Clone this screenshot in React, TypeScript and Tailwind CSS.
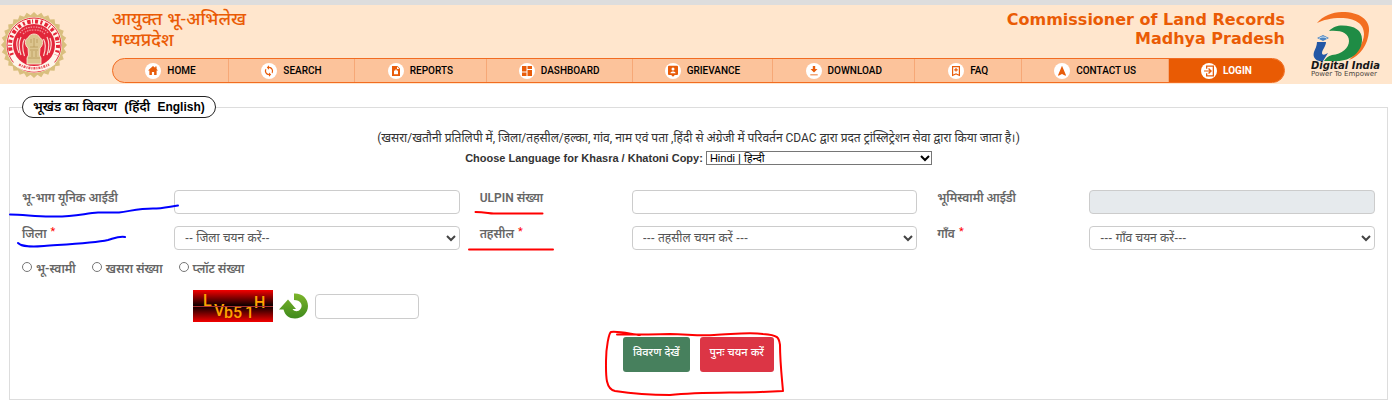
import type { ReactNode } from 'react'

type NavItem = { label: string; width: string; icon: ReactNode }

const navItems: NavItem[] = [
  {
    label: 'HOME',
    width: 'grow-[116]',
    icon: <path d="M8 3 3 7.4h1.4V12h2.5V9h2.2v3h2.5V7.4H13L11.6 6V3.6h-1.4v1.2z" />,
  },
  {
    label: 'SEARCH',
    width: 'grow-[126]',
    icon: (
      <path d="M8 3.8V2.3L5.8 4.5 8 6.7V5.1a3 3 0 0 1 2.6 4.4l.9.9A4.3 4.3 0 0 0 8 3.8zM8 11a3 3 0 0 1-2.6-4.4l-.9-.9A4.3 4.3 0 0 0 8 12.3v1.5l2.2-2.2L8 9.4z" />
    ),
  },
  {
    label: 'REPORTS',
    width: 'grow-[132]',
    icon: (
      <path fillRule="evenodd" d="M4 3h5.5L12 5.5V13H4zM6 7.8v3.4h4V7.8h-.7a1.3 1.3 0 0 0-2.6 0zm1.4 0a.6.6 0 0 1 1.2 0zM9 3.6V6h2.4z" />
    ),
  },
  {
    label: 'DASHBOARD',
    width: 'grow-[146]',
    icon: <path d="M3 3h4.5v5.5H3zM8.5 3H13v3H8.5zM3 9.5h4.5V13H3zM8.5 7H13v6H8.5z" />,
  },
  {
    label: 'GRIEVANCE',
    width: 'grow-[141]',
    icon: (
      <path fillRule="evenodd" d="M4 2.8h8a1 1 0 0 1 1 1V11a1 1 0 0 1-1 1H9.8L8 13.8 6.2 12H4a1 1 0 0 1-1-1V3.800a1 1 0 0 1 1-1zM8 4.600a1.500 1.500 0 1 0 0 3 1.500 1.500 0 0 0 0-3zM5.400 10.200h5.200c0-2.400-5.200-2.400-5.200 0z" />
    ),
  },
  {
    label: 'DOWNLOAD',
    width: 'grow-[142]',
    icon: (
      <>
        <path d="M6.800 3h2.400v3h2.300L8 9.600 4.500 6h2.300z" />
        <path d="M4.300 11h7.400v1.400H4.300z" opacity=".55" />
      </>
    ),
  },
  {
    label: 'FAQ',
    width: 'grow-[107]',
    icon: (
      <path fillRule="evenodd" d="M4 3h8v10.300L8 11.600l-4 1.700zM5.200 4.200v7.200L8 10.200l2.800 1.200V4.200zM7.400 5h1.200v1.200h1.200v1.200H8.600v1.200H7.400V7.400H6.200V6.200h1.200z" />
    ),
  },
  {
    label: 'CONTACT US',
    width: 'grow-[147]',
    icon: <path d="M8 2.800 12 12.300l-.5.500L8 11l-3.500 1.800-.5-.5z" />,
  },
  {
    label: 'LOGIN',
    width: 'grow-[116]',
    icon: (
      <path fillRule="evenodd" d="M5 2.500h8v11H5V10.300h1.300v1.900h5.400V3.800H6.300v1.900H5zM8 5l3 3-3 3-.9-.9 1.400-1.500H3V7.400h5.500L7.100 5.900z" />
    ),
  },
]

function Seal() {
  const points: string[] = []
  for (let i = 0; i < 56; i++) {
    const angle = (i * Math.PI) / 28
    const radius = i % 2 ? 30 : 33
    points.push(`${(34 + radius * Math.cos(angle)).toFixed(1)},${(34 + radius * Math.sin(angle)).toFixed(1)}`)
  }
  return (
    <svg viewBox="0 0 68 68" className="h-[68px] w-[68px] shrink-0" aria-label="Seal of Madhya Pradesh" role="img">
      <polygon points={points.join(' ')} fill="#d9bf7e" />
      <circle cx="34" cy="34" r="28" fill="#fff6ec" />
      <circle cx="34" cy="34" r="27" fill="none" stroke="#e52536" strokeWidth="1" />
      <path d="M12 44a24 24 0 1 1 44 0" fill="none" stroke="#e52536" strokeWidth="4" strokeDasharray="2 2.500 3.500 1.500 1 2 3 2.500" />
      <circle cx="34" cy="34" r="21" fill="#e2263a" />
      <g fill="none" stroke="#fbd9d0" strokeWidth="1.200">
        <path d="M18 27c-2 5-1 11 1 15M21 26c-3 6-2 12 0 18M24.500 28c-3 5-2 11 0 17M50 27c2 5 1 11-1 15M47 26c3 6 2 12 0 18M43.500 28c3 5 2 11 0 17" />
        <path d="M20 22c3-4 7-6 14-6s11 2 14 6M23 23c3-3 6-4 11-4s8 1 11 4" strokeDasharray="1.500 1" stroke="#f4959a" />
      </g>
      <path d="M28 27c1-3 4-4 6-4s5 1 6 4c4 1 3 8 0 10l-.5 7 1.500 3v6H27v-6l1.500-3-.5-7c-3-2-4-9 0-10z" fill="#dcc58f" stroke="#fff0dc" strokeWidth=".8" />
      <path d="M31 28v4M37 28v4M34 27v9M30 36h8M30 39h8M28 47h12M32 40v6M36 40v6" stroke="#b89a5c" strokeWidth=".8" />
      <path d="M15 49c10 9 28 9 38 0l2.500 4c-12 10-31 10-43 0z" fill="#fff6ec" />
      <path d="M19 53.500c9 5 21 5 30 0" fill="none" stroke="#e8505a" strokeWidth="2.500" strokeDasharray="2 1 1 1" />
    </svg>
  )
}

function DigitalIndia() {
  return (
    <svg viewBox="0 0 72 70" className="h-[70px] w-[72px] shrink-0" aria-label="Digital India" role="img">
      <path d="M6 12C12 5 21 1 31 1c18 0 28 8 27 19-1 14-9 25-20 29 8-8 15-17 15-26C53 12 43 7 30 7 20 7 12 9 6 12z" fill="#f36f21" />
      <path d="M18 20c4-4 8-5.500 13-5.500 13 0 20 5 20 14C51 41 40 50 26 50H13c2-3 4-5 8-6 10-1 17-7 17-14 0-8-8-11-20-10z" fill="#1f8c45" />
      <path d="M6 31h9c0 4-4 8-4 11 0 2 2 2 4 1l2-1-5 8C6 51 1 47 3 41c1-3 3-6 3-10z" fill="#2357a5" />
      <path d="M12 24 6 27l6 3 6-3z" fill="#4d85c2" />
      <path d="M8 27.500c2-2 6-2 8 0" fill="none" stroke="#dcebf5" strokeWidth="1" />
      <text x="0" y="58" className="fill-[#171717] font-['DejaVu_Sans'] text-[10px] font-bold italic">Digital India</text>
      <text x="0" y="65" className="fill-[#4b4540] font-['DejaVu_Sans'] text-[7px]">Power To Empower</text>
    </svg>
  )
}

const inputClass =
  'h-6 w-full min-w-0 rounded-[4px] border border-[#ccc] bg-white px-2 text-[12px] text-[#555] outline-none disabled:bg-[#e6eaed]'

function Chevron({ className }: { className: string }) {
  return (
    <svg viewBox="0 0 10 8" className={`pointer-events-none absolute ${className}`} aria-hidden="true">
      <path d="M1 2l4 4 4-4" fill="none" stroke="currentColor" strokeWidth="2" />
    </svg>
  )
}

function Field({ id, label, required, option, disabled }: {
  id: string
  label: string
  required?: boolean
  option?: string
  disabled?: boolean
}) {
  return (
    <div className="grid grid-cols-[152px_1fr]">
      <label htmlFor={id} className="font-['Roboto','Noto_Sans',sans-serif] text-[12px] leading-4 font-semibold text-[#666]">
        {label}
        {required && <span className="pl-1 align-top text-[11px] leading-none font-normal text-[#f00]">*</span>}
      </label>
      {option ? (
        <div className="relative h-6">
          <select id={id} className="block h-6 w-full appearance-none rounded-[4px] border border-[#ccc] bg-white pr-5 pl-2.5 text-[12px] text-[#555]">
            <option>{option}</option>
          </select>
          <Chevron className="top-2 right-1 h-2 w-2.5 text-[#444]" />
        </div>
      ) : (
        <input id={id} type="text" disabled={disabled} className={inputClass} />
      )}
    </div>
  )
}

function Captcha() {
  return (
    <svg viewBox="0 0 80 32" className="h-8 w-20" role="img" aria-label="Captcha">
      <defs>
        <linearGradient id="captcha" x1="0" y1="0" x2="0" y2="1">
          <stop offset="0" stopColor="#f40000" />
          <stop offset=".5" stopColor="#080000" />
          <stop offset="1" stopColor="#f40000" />
        </linearGradient>
      </defs>
      <rect width="80" height="32" fill="url(#captcha)" />
      <g className="fill-[#ffa200] font-['Roboto',sans-serif] text-[16px] font-medium">
        <text x="10" y="16">L</text>
        <text x="21" y="26">V</text>
        <text x="31" y="28">b5</text>
        <text x="52" y="28">1</text>
        <text x="61" y="18">H</text>
      </g>
      <path d="M0 16.500h80" stroke="#a33" strokeWidth="1" />
    </svg>
  )
}

function Refresh() {
  return (
    <svg viewBox="0 0 30 26" className="h-[26px] w-[30px]" aria-hidden="true">
      <defs>
        <linearGradient id="refresh" x1="0" y1="0" x2="0" y2="1">
          <stop offset="0" stopColor="#7db52c" />
          <stop offset="1" stopColor="#3f8a1c" />
        </linearGradient>
      </defs>
      <path d="M15 .500c8-.5 14 5 14 12.500 0 7-6 12.500-13 12.500-6 0-10-3-11.500-9H0L9 6.500 17 16h-3.500c2 3 6 3 8 0 3-4 0-9-6.500-9z" fill="url(#refresh)" />
    </svg>
  )
}

function Annotations() {
  return (
    <svg viewBox="0 0 1392 403" className="pointer-events-none absolute top-0 left-0 h-[403px] w-[1392px]" fill="none" strokeWidth="2" strokeLinecap="round" strokeLinejoin="round" aria-hidden="true">
      <g stroke="#00f">
        <path d="M10 214.500c13 0 25 2 40 2 22 1 34-3 48-4h21c14-2 21-4 34-4 9 0 17-2 25-3" />
        <path d="M18 243c4 4 13 4 26 3 29-2 50-3 64-6 7-2 11-4 17-3" />
      </g>
      <g stroke="#f00">
        <path d="M475.500 212c8 0 12 1 18 1.500h49" />
        <path d="M469 249.500h84" />
        <path d="M617 334.500c25 0 36 0 53-.5 16 0 27 2 44 1 22-1 35-3 49-1 16 1 16 4 17 11 0 17 2 34 3 46l-22 1c-34 1-62 0-91 3-21 0-42-2-55-4-10-2-9-17-9-30 0-14 3-28 5-29 7-1 20 2 29 3" />
      </g>
    </svg>
  )
}

export default function App() {
  return (
    <div className="relative overflow-hidden bg-white pb-1 font-['Liberation_Sans','Noto_Sans',sans-serif]">
      <header className="flex border-t-[5px] border-[#ddd] bg-[#ffe6cd] pb-px">
        <div className="flex w-28 shrink-0 pt-1.5">
          <Seal />
        </div>
        <div className="min-w-0 flex-1">
          <div className="flex h-[53px] justify-between pt-1 text-[#ea5b05]">
            <div className="text-[18px] leading-[21px] font-medium">
              <p>आयुक्त भू-अभिलेख</p>
              <p>मध्यप्रदेश</p>
            </div>
            <div className="pt-px text-right font-['DejaVu_Sans'] text-[16px] leading-[19px] font-bold">
              <p>Commissioner of Land Records</p>
              <p>Madhya Pradesh</p>
            </div>
          </div>
          <nav className="flex h-[25px] overflow-hidden rounded-full border border-[#f26c21] bg-[#fcc39b] font-['Roboto'] text-[10px] font-medium text-black">
            {navItems.map(({ label, width, icon }) => (
              <a key={label} href="#" className={`flex basis-0 items-center justify-center gap-1.5 whitespace-nowrap ${width} ${label === 'LOGIN' ? 'bg-[#e95b04] font-bold text-white' : 'border-r border-[#f6a877]'}`}>
                <span className="flex h-4 w-4 items-center justify-center rounded-full bg-white">
                  <svg viewBox="0 0 16 16" className="h-4 w-4 fill-[#e85c0a]" aria-hidden="true">{icon}</svg>
                </span>
                {label}
              </a>
            ))}
          </nav>
        </div>
        <div className="flex w-[107px] shrink-0 justify-center pt-1.5 pl-4">
          <DigitalIndia />
        </div>
      </header>

      <main className="pt-3 pr-1 pl-[9px]">
        <fieldset className="min-w-0 border border-[#ddd] px-3 pb-[27px]">
          <legend className="rounded-full border border-[#222] px-2.5 text-[13px] leading-[20px] font-semibold whitespace-pre text-black">
            भूखंड का विवरण  (हिंदी  <span className="text-[12px]">English)</span>
          </legend>
          <p className="pt-3 text-center font-['Roboto','Noto_Sans',sans-serif] text-[12px] leading-4 text-[#333]">
            (खसरा/खतौनी प्रतिलिपी में, जिला/तहसील/हल्का, गांव, नाम एवं पता ,हिंदी से अंग्रेजी में परिवर्तन CDAC द्वारा प्रदत ट्रांस्लिट्रेशन सेवा द्वारा किया जाता है।)
          </p>
          <div className="flex items-center justify-center gap-[3px] pt-1 text-[11px] leading-4">
            <label htmlFor="language" className="font-bold text-[#333]">Choose Language for Khasra / Khatoni Copy:</label>
            <div className="relative">
              <select id="language" className="block h-3.5 w-[226px] appearance-none border border-[#767676] bg-white pl-[3px] text-[11px] leading-3 text-black">
                <option>Hindi | हिन्दी</option>
              </select>
              <Chevron className="top-[3px] right-0.5 h-2 w-2.5 text-black" />
            </div>
          </div>

          <div className="grid grid-cols-3 gap-x-5 gap-y-3 pt-6">
            <Field id="uid" label="भू-भाग यूनिक आईडी" />
            <Field id="ulpin" label="ULPIN संख्या" />
            <Field id="owner" label="भूमिस्वामी आईडी" disabled />
            <Field id="district" label="जिला" required option="-- जिला चयन करें--" />
            <Field id="tehsil" label="तहसील" required option="--- तहसील चयन करें ---" />
            <Field id="village" label="गाँव" required option="--- गॉंव चयन करें---" />
          </div>

          <div className="flex gap-4 pt-2.5 font-['Roboto','Noto_Sans',sans-serif] text-[12px] leading-[18px] font-semibold text-[#666]">
            {['भू-स्वामी', 'खसरा संख्या', 'प्लॉट संख्या'].map((label) => (
              <label key={label} className="flex gap-1">
                <input type="radio" name="searchBy" className="mt-0.5 h-2.5 w-2.5 appearance-none rounded-full border border-[#767676] bg-white" />
                {label}
              </label>
            ))}
          </div>

          <div className="flex items-center gap-1.5 pt-3 pl-[171px]">
            <Captcha />
            <button type="button" aria-label="Refresh captcha"><Refresh /></button>
            <input aria-label="Captcha text" className="h-[25px] w-[104px] rounded-[4px] border border-[#ccc] bg-white px-2 text-[12px]" />
          </div>

          <div className="flex justify-center gap-2.5 pt-[15px] text-[11px] font-medium text-white">
            <button type="button" className="h-[35px] rounded-[3px] bg-[#47805d] px-2.5 pb-1">विवरण देखें</button>
            <button type="button" className="h-[35px] rounded-[3px] bg-[#dc3545] px-2.5 pb-1">पुनः चयन करें</button>
          </div>
        </fieldset>
      </main>
      <Annotations />
    </div>
  )
}
